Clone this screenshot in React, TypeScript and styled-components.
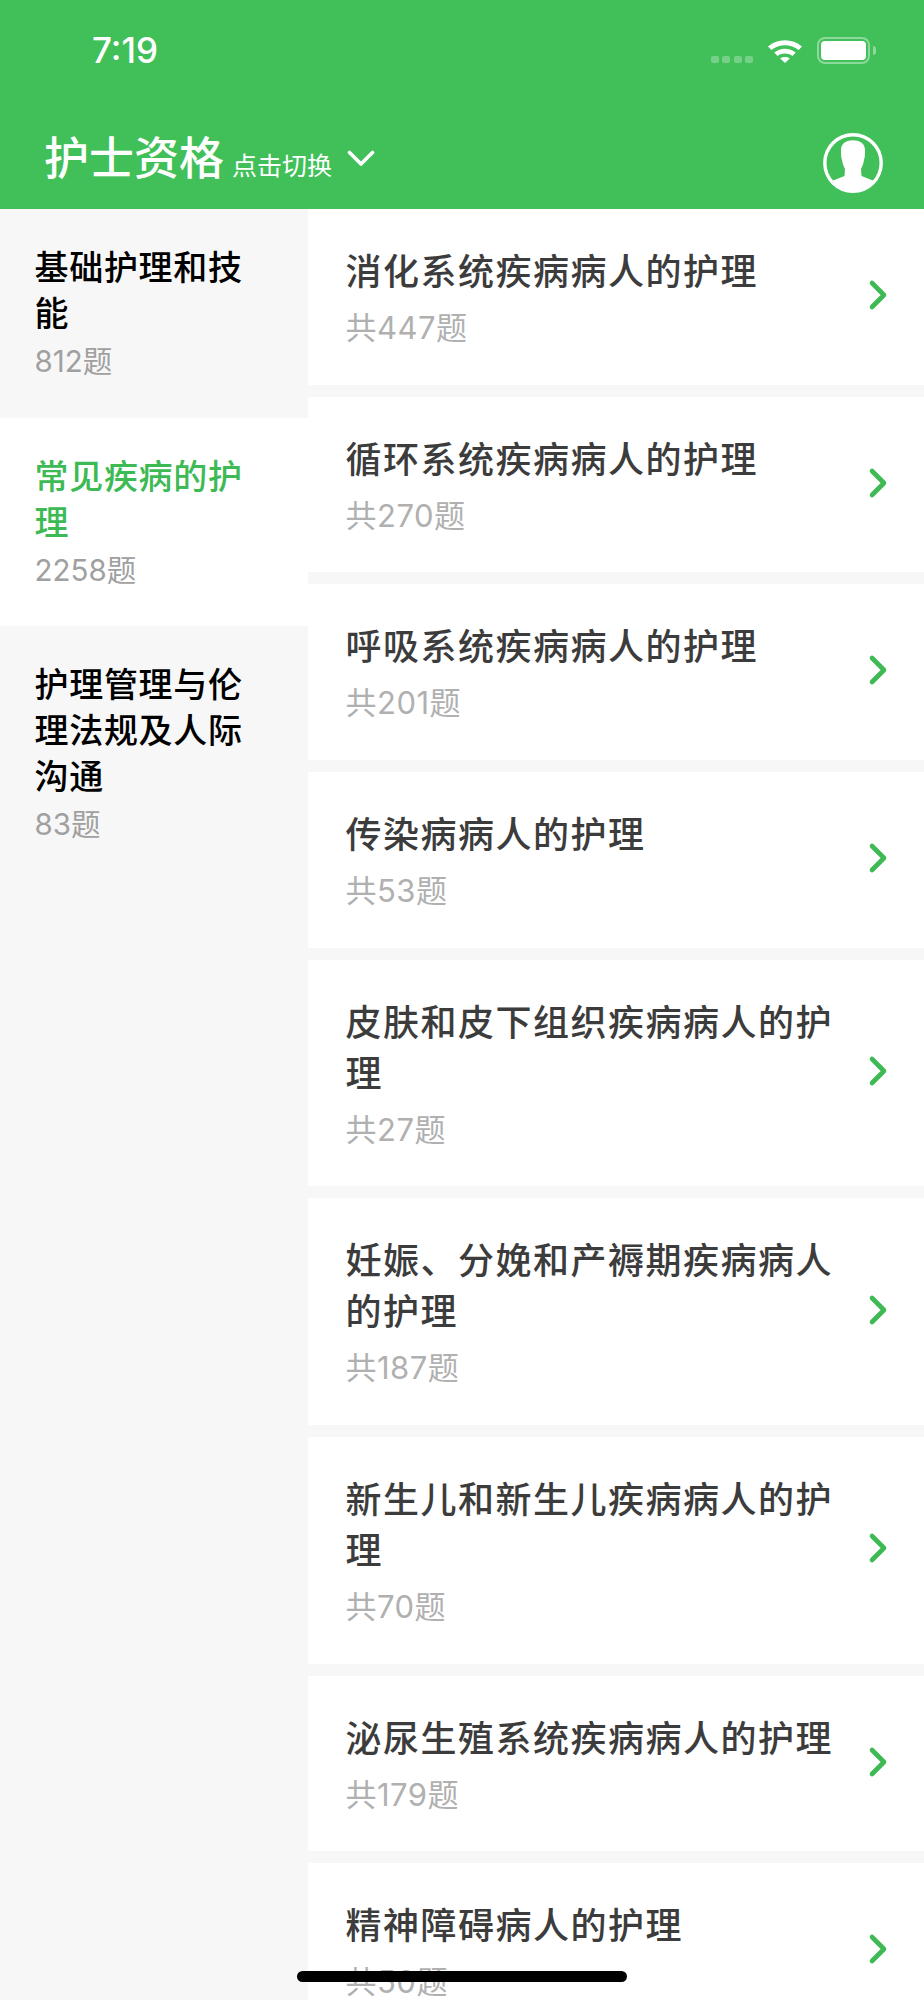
import React, { FC } from 'react'
import styled, { createGlobalStyle } from 'styled-components'

interface Category {
  name: string
  count: string
}

interface Chapter {
  name: string
  count: string
}

const categories: Category[] = [
  { name: '基础护理和技能', count: '812题' },
  { name: '常见疾病的护理', count: '2258题' },
  { name: '护理管理与伦理法规及人际沟通', count: '83题' },
]

const chapters: Chapter[] = [
  { name: '消化系统疾病病人的护理', count: '共447题' },
  { name: '循环系统疾病病人的护理', count: '共270题' },
  { name: '呼吸系统疾病病人的护理', count: '共201题' },
  { name: '传染病病人的护理', count: '共53题' },
  { name: '皮肤和皮下组织疾病病人的护理', count: '共27题' },
  { name: '妊娠、分娩和产褥期疾病病人的护理', count: '共187题' },
  { name: '新生儿和新生儿疾病病人的护理', count: '共70题' },
  { name: '泌尿生殖系统疾病病人的护理', count: '共179题' },
  { name: '精神障碍病人的护理', count: '共50题' },
]

const App: FC = () => {
  return (
    <Screen>
      <GlobalStyle />
      <Header>
        <StatusBar>
          <Time>7:19</Time>
          <StatusIcons>
            <SignalDots>
              <Dot />
              <Dot />
              <Dot />
              <Dot />
            </SignalDots>
            <svg width="36" height="26" viewBox="0 0 36 26">
              <path d="M1 9.5C10.5 1 25.5 1 35 9.5L31.6 13C24 6.6 12 6.6 4.4 13Z" fill="#fff" />
              <path d="M7.2 15.6C13.6 10.4 22.4 10.4 28.8 15.6L25.4 19C21 15.8 15 15.8 10.6 19Z" fill="#fff" />
              <path d="M13.2 21.4C16 19.6 20 19.6 22.8 21.4L18 26Z" fill="#fff" />
            </svg>
            <Battery>
              <BatteryFill />
              <BatteryCap />
            </Battery>
          </StatusIcons>
        </StatusBar>
        <NavBar>
          <NavTitle>护士资格</NavTitle>
          <NavHint>点击切换</NavHint>
          <NavArrow width="28" height="17" viewBox="0 0 28 17">
            <path d="M2.5 2.5L14 14L25.5 2.5" fill="none" stroke="#fff" strokeWidth="3.6" strokeLinecap="round" strokeLinejoin="round" />
          </NavArrow>
          <Avatar width="60" height="60" viewBox="0 0 60 60">
            <circle cx="30" cy="30" r="28.2" fill="none" stroke="#fff" strokeWidth="3.4" />
            <path
              d="M18 17C18 10 24 7.3 30 7.3S42 10 42 17C42 21 42 24 41 27C40.5 31 39 34 38 36L38.5 43L50.5 47.7C45.5 54 38 58 30 58S14.5 54 9.5 47.7L21.5 43L22 36C21 34 19.5 31 19 27C18 24 18 21 18 17Z"
              fill="#fff"
            />
          </Avatar>
        </NavBar>
      </Header>
      <Content>
        <Sidebar>
          {categories.map((category, index) => (
            <SideItem key={category.name} $active={index === 1}>
              <SideName $active={index === 1}>{category.name}</SideName>
              <SideCount>{category.count}</SideCount>
            </SideItem>
          ))}
        </Sidebar>
        <ChapterList>
          {chapters.map((chapter) => (
            <ChapterRow key={chapter.name}>
              <ChapterText>
                <ChapterName>{chapter.name}</ChapterName>
                <ChapterCount>{chapter.count}</ChapterCount>
              </ChapterText>
              <RowArrow width="22" height="34" viewBox="0 0 22 34">
                <path d="M4 5L16 17L4 29" fill="none" stroke="#3dba54" strokeWidth="4.6" strokeLinecap="round" strokeLinejoin="round" />
              </RowArrow>
            </ChapterRow>
          ))}
        </ChapterList>
      </Content>
      <HomeBar />
    </Screen>
  )
}

const GlobalStyle = createGlobalStyle`
  html, body {
    margin: 0;
    padding: 0;
    background: #f7f7f7;
  }
  body {
    font-family: Inter, "Noto Sans CJK SC", sans-serif;
  }
`
const Screen = styled.div`
  height: 2000px;
  overflow: hidden;
  position: relative;
  width: 924px;
`
const Header = styled.header`
  background: #41bf59;
  color: #fff;
  height: 209px;
`
const StatusBar = styled.div`
  align-items: center;
  display: flex;
  height: 100px;
  justify-content: space-between;
  padding: 0 54px 0 92px;
`
const Time = styled.div`
  font-size: 35px;
  font-weight: 500;
`
const StatusIcons = styled.div`
  align-items: center;
  display: flex;
  gap: 14px;
`
const SignalDots = styled.div`
  align-self: flex-end;
  display: flex;
  gap: 3.5px;
  margin-bottom: 1px;
`
const Dot = styled.span`
  background: rgba(255, 255, 255, 0.28);
  border-radius: 2px;
  height: 7px;
  width: 8px;
`
const Battery = styled.div`
  border: 2px solid rgba(255, 255, 255, 0.4);
  border-radius: 8px;
  box-sizing: border-box;
  height: 27px;
  padding: 2px;
  position: relative;
  width: 53px;
`
const BatteryFill = styled.div`
  background: #fff;
  border-radius: 4px;
  height: 100%;
`
const BatteryCap = styled.span`
  background: rgba(255, 255, 255, 0.4);
  border-radius: 0 3px 3px 0;
  height: 9px;
  position: absolute;
  right: -8px;
  top: 7px;
  width: 3px;
`
const NavBar = styled.div`
  align-items: center;
  box-sizing: border-box;
  display: flex;
  height: 109px;
  padding: 17px 41px 0 44px;
`
const NavTitle = styled.div`
  font-size: 45px;
  font-weight: 500;
  line-height: 60px;
  margin-top: -8px;
`
const NavHint = styled.div`
  font-size: 25px;
  margin: 2px 0 0 8px;
`
const NavArrow = styled.svg`
  margin: -10px 0 0 15px;
`
const Avatar = styled.svg`
  margin-left: auto;
`
const Content = styled.div`
  display: flex;
`
const Sidebar = styled.aside`
  flex: 0 0 308px;
`
const SideItem = styled.div<{ $active: boolean }>`
  background: ${(props) => (props.$active ? '#fff' : 'transparent')};
  box-sizing: border-box;
  padding: 36px 50px 33.5px 34.5px;
`
const SideName = styled.div<{ $active: boolean }>`
  color: ${(props) => (props.$active ? '#3dba54' : '#000')};
  font-size: 34px;
  font-weight: 500;
  letter-spacing: 0.7px;
  line-height: 46px;
`
const SideCount = styled.div`
  color: #a0a0a0;
  font-size: 29.5px;
  line-height: 47px;
  position: relative;
  top: 1px;
`
const ChapterList = styled.main`
  flex: 1;
`
const ChapterRow = styled.div`
  align-items: center;
  background: #fff;
  display: flex;
  justify-content: space-between;
  margin-bottom: 12px;
  padding: 38px 34px 35.67px 37.5px;
`
const ChapterText = styled.div`
  width: 495px;
`
const ChapterName = styled.div`
  color: #3c3c3c;
  font-size: 36px;
  font-weight: 500;
  letter-spacing: 1.5px;
  line-height: 51px;
`
const ChapterCount = styled.div`
  color: #b0b0b0;
  font-size: 31px;
  letter-spacing: 0.5px;
  line-height: 46px;
  margin-top: 7px;
  margin-bottom: -2px;
`
const RowArrow = styled.svg`
  margin-top: -6px;
`
const HomeBar = styled.div`
  background: #000;
  border-radius: 6px;
  bottom: 18px;
  height: 11px;
  left: 297px;
  position: absolute;
  width: 330px;
`

export default App
